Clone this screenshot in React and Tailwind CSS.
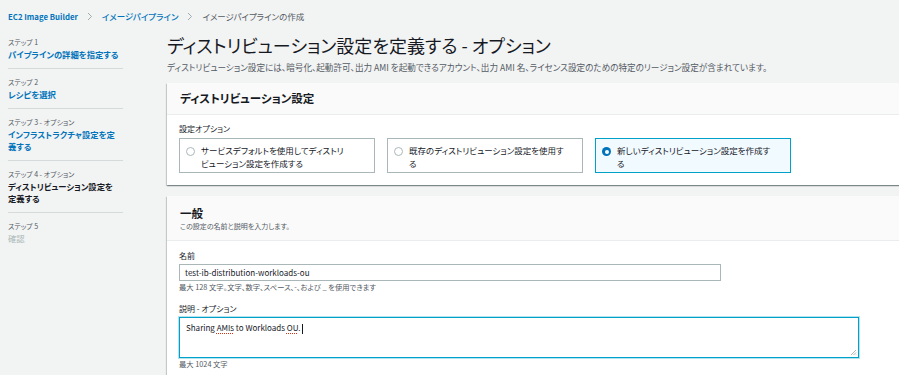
import React from "react";

const FONT = {
  fontFamily: '"Noto Sans CJK JP", "Noto Sans", sans-serif',
};

const STEPS = [
  { step: "ステップ 1", title: ["パイプラインの詳細を指定する"], state: "link" },
  { step: "ステップ 2", title: ["レシピを選択"], state: "link" },
  { step: "ステップ 3 - オプション", title: ["インフラストラクチャ設定を定", "義する"], state: "link" },
  { step: "ステップ 4 - オプション", title: ["ディストリビューション設定を", "定義する"], state: "current" },
  { step: "ステップ 5", title: ["確認"], state: "disabled" },
];

const CARD_SHADOW =
  "bg-white shadow-[0_1px_1px_0_rgba(0,28,36,0.3),1px_1px_1px_0_rgba(0,28,36,0.15),-1px_1px_1px_0_rgba(0,28,36,0.15)]";

function Chevron() {
  return (
    <svg width="6" height="9" viewBox="0 0 6 9" className="text-[#95a5a6]">
      <path d="M1 1l3.5 3.5L1 8" fill="none" stroke="currentColor" strokeWidth="0.9" />
    </svg>
  );
}

function Radio({ checked }) {
  if (checked) {
    return (
      <span className="mt-[3px] flex h-[9px] w-[9px] shrink-0 items-center justify-center rounded-full bg-[#0073bb]">
        <span className="h-[4px] w-[4px] rounded-full bg-white" />
      </span>
    );
  }
  return <span className="mt-[3px] h-[9px] w-[9px] shrink-0 rounded-full border border-[#aab7b8] bg-white" />;
}

function Tile({ lines, checked }) {
  return (
    <div
      className={`flex h-[35px] w-[196px] gap-[6px] border px-[6px] pt-[5px] ${
        checked ? "border-[#00a1c9] bg-[#f1faff]" : "border-[#aab7b8] bg-white"
      }`}
    >
      <Radio checked={checked} />
      <div className="whitespace-nowrap text-[8.5px] leading-[13px] text-[#16191f]">
        {lines.map((l) => (
          <div key={l}>{l}</div>
        ))}
      </div>
    </div>
  );
}

export default function App() {
  return (
    <div
      style={FONT}
      className="h-[375px] w-[899px] overflow-hidden bg-[#f2f3f3] text-[#16191f] [font-feature-settings:'palt']"
    >
      {/* breadcrumbs */}
      <div className="flex h-[33px] items-center gap-[9px] pl-[8px] text-[8.5px]">
        <span className="text-[7.8px] font-semibold text-[#0073bb]">EC2 Image Builder</span>
        <Chevron />
        <span className="font-medium text-[#0073bb]">イメージパイプライン</span>
        <Chevron />
        <span className="text-[#545b64]">イメージパイプラインの作成</span>
      </div>

      <div className="flex">
        {/* step nav */}
        <nav className="ml-[8px] w-[115px] shrink-0">
          {STEPS.map((s, i) => (
            <div
              key={s.step}
              className={`pb-[8px] ${i === 0 ? "pt-[3px]" : "pt-[7px]"} ${
                i < STEPS.length - 1 ? "border-b border-[#d5dbdb]" : ""
              }`}
            >
              <div className="text-[7px] leading-[12px] text-[#545b64]">{s.step}</div>
              <div
                className={`whitespace-nowrap text-[8.3px] leading-[12px] ${
                  s.state === "link"
                    ? "font-semibold text-[#0073bb]"
                    : s.state === "current"
                    ? "font-bold text-[#16191f]"
                    : "text-[#aab7b8]"
                }`}
              >
                {s.title.map((t) => (
                  <div key={t}>{t}</div>
                ))}
              </div>
            </div>
          ))}
        </nav>

        {/* main */}
        <main className="ml-[44px] -mr-[20px] flex-1">
          <h1 className="text-[18px] leading-[24px] text-[#16191f]">
            ディストリビューション設定を定義する - オプション
          </h1>
          <p className="mt-[4px] whitespace-nowrap text-[8.6px] leading-[12px] text-[#545b64]">
            ディストリビューション設定には、暗号化、起動許可、出力 AMI を起動できるアカウント、出力 AMI 名、ライセンス設定のための特定のリージョン設定が含まれています。
          </p>

          {/* distribution settings */}
          <section className={`mt-[10px] ${CARD_SHADOW}`}>
            <div className="flex h-[32px] items-center border-b border-[#eaeded] bg-[#fafafa] px-[13px]">
              <h2 className="text-[11.5px] font-bold">ディストリビューション設定</h2>
            </div>
            <div className="px-[12px] pt-[8px] pb-[12px]">
              <div className="text-[8px] leading-[12px] text-[#16191f]">設定オプション</div>
              <div className="mt-[3px] flex gap-[12px]">
                <Tile lines={["サービスデフォルトを使用してディストリ", "ビューション設定を作成する"]} />
                <Tile lines={["既存のディストリビューション設定を使用す", "る"]} />
                <Tile lines={["新しいディストリビューション設定を作成す", "る"]} checked />
              </div>
            </div>
          </section>

          {/* general */}
          <section className={`mt-[11px] ${CARD_SHADOW}`}>
            <div className="border-b border-[#eaeded] bg-[#fafafa] px-[13px] pt-[10px] pb-[8px]">
              <h2 className="text-[11.5px] leading-[15px] font-bold">一般</h2>
              <p className="text-[7px] leading-[11px] text-[#545b64]">この設定の名前と説明を入力します。</p>
            </div>
            <div className="px-[12px] pt-[9px] pb-[20px]">
              <div className="text-[8px] leading-[12px]">名前</div>
              <div className="mt-[2px] flex h-[17px] w-[542px] items-center border border-[#aab7b8] px-[5px] text-[8px]">
                test-ib-distribution-workloads-ou
              </div>
              <div className="mt-[1px] text-[7.3px] leading-[11px] text-[#545b64]">
                最大 128 文字。文字、数字、スペース、-、および _ を使用できます
              </div>

              <div className="mt-[10px] text-[8px] leading-[12px]">説明 - オプション</div>
              <div className="relative mt-[2px] h-[41px] w-[680px] border border-[#00a1c9] px-[6px] pt-[4px] text-[8px] leading-[12px] shadow-[0_0_0_1px_rgba(0,161,201,0.3)]">
                Sharing{" "}
                <span className="underline decoration-dotted decoration-[#d13212] underline-offset-2">AMIs</span> to
                Workloads{" "}
                <span className="underline decoration-dotted decoration-[#d13212] underline-offset-2">OU</span>.
                <span className="ml-[1px] inline-block h-[10px] w-px bg-[#16191f] align-middle" />
                <svg className="absolute right-[1px] bottom-[1px]" width="7" height="7" viewBox="0 0 7 7">
                  <path d="M6 1L1 6M6 3.5L3.5 6M6 5.5L5.5 6" stroke="#9aa3a6" strokeWidth="0.8" />
                </svg>
              </div>
              <div className="mt-[1px] text-[7.3px] leading-[11px] text-[#545b64]">最大 1024 文字</div>
            </div>
          </section>
        </main>
      </div>
    </div>
  );
}
